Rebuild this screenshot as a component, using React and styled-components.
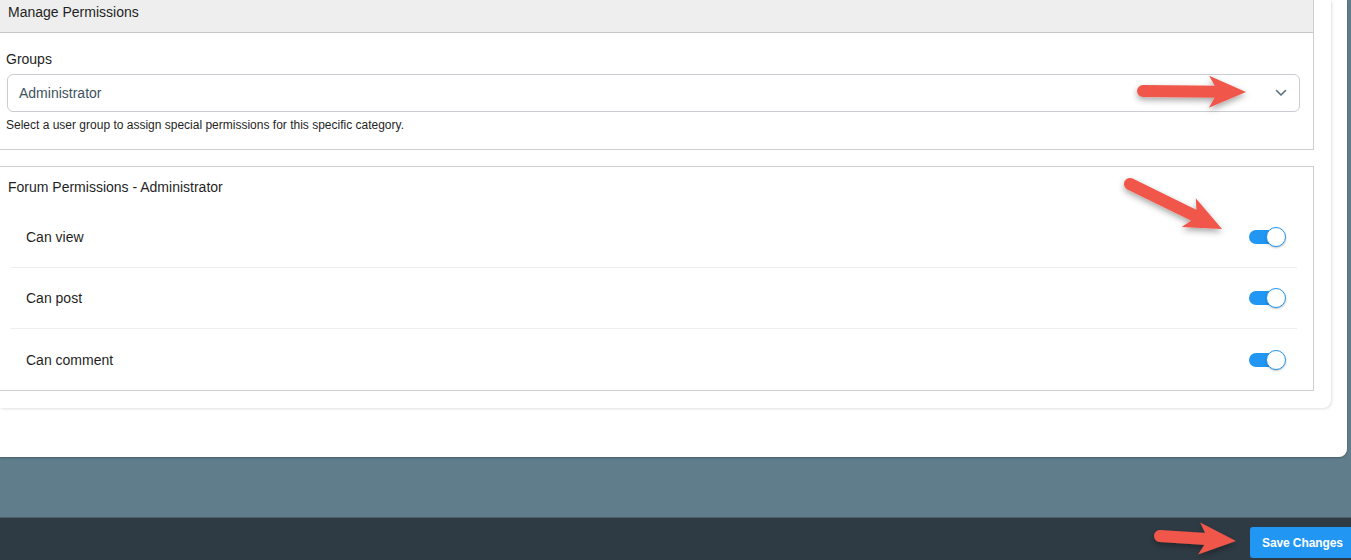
import React from 'react';
import styled, { createGlobalStyle } from 'styled-components';

const GlobalStyle = createGlobalStyle`
  html, body {
    margin: 0;
    padding: 0;
    background: #607d8b;
    font-family: "Liberation Sans", Arial, sans-serif;
    overflow: hidden;
  }
`;

const Page = styled.div`
  position: relative;
  width: 1351px;
  height: 560px;
  display: flex;
  flex-direction: column;
  background: #607d8b;
`;

const Sheet = styled.div`
  width: 1347px;
  height: 457px;
  background: #fff;
  border-radius: 0 0 8px 0;
  box-sizing: border-box;
  box-shadow: 0 1px 2px rgba(0, 0, 0, 0.25);
`;

const Card = styled.div`
  width: 1331px;
  height: 408px;
  box-sizing: border-box;
  padding-right: 17px;
  background: #fff;
  border-radius: 0 0 8px 0;
  box-shadow: 1px 1px 3px rgba(0, 0, 0, 0.12);
  display: flex;
  flex-direction: column;
  gap: 16px;
`;

const Block = styled.div`
  border-right: 1px solid #cfcfcf;
`;

const Header = styled.div`
  height: 33px;
  box-sizing: border-box;
  padding: 4px 8px 0;
  background: #eeeeee;
  border-bottom: 1px solid #c6c6c6;
  font-size: 14px;
  color: #1f1f1f;
`;

const GroupsBody = styled.div`
  height: 117px;
  box-sizing: border-box;
  padding: 18px 13px 0 7px;
  border-bottom: 1px solid #cfcfcf;
`;

const Label = styled.div`
  font-size: 14px;
  color: #1f1f1f;
  line-height: 17px;
  margin: 0 0 6px -1px;
`;

const Select = styled.div`
  height: 38px;
  box-sizing: border-box;
  border: 1px solid #c9cdd2;
  border-radius: 6px;
  display: flex;
  align-items: center;
  justify-content: space-between;
  padding: 0 12px 0 11px;
  font-size: 14px;
  color: #3e5360;
`;

const Help = styled.div`
  font-size: 12px;
  color: #1f1f1f;
  margin: 6px 0 0 -1px;
`;

const Section = styled.div`
  height: 225px;
  box-sizing: border-box;
  border-top: 1px solid #cfcfcf;
  border-bottom: 1px solid #cfcfcf;
  border-right: 1px solid #cfcfcf;
  padding: 12px 16px 0 10px;
  display: flex;
  flex-direction: column;
`;

const SectionTitle = styled.div`
  font-size: 14px;
  line-height: 17px;
  color: #1f1f1f;
  margin: 0 0 11px -2px;
`;

const Row = styled.div`
  height: 61px;
  box-sizing: border-box;
  display: flex;
  align-items: center;
  justify-content: space-between;
  padding: 0 11px 0 16px;
  border-bottom: ${(p) => (p.$last ? 'none' : '1px solid #eeeeee')};
  font-size: 14px;
  color: #1f1f1f;
`;

const Toggle = styled.div`
  position: relative;
  width: 37px;
  height: 20px;
  display: flex;
  align-items: center;
  justify-content: flex-end;

  &::before {
    content: '';
    position: absolute;
    left: 0;
    right: 4px;
    top: 3px;
    bottom: 3px;
    border-radius: 7px;
    background: #2196f3;
  }
`;

const Knob = styled.span`
  position: relative;
  width: 20px;
  height: 20px;
  box-sizing: border-box;
  border-radius: 50%;
  background: #fff;
  border: 1px solid #2196f3;
  box-shadow: 0 1px 2px rgba(0, 0, 0, 0.25);
`;

const Spacer = styled.div`
  flex: 1;
`;

const Footer = styled.div`
  height: 43px;
  background: #2f3b44;
  border-top: 1px solid #4d5f69;
  display: flex;
  justify-content: flex-end;
  align-items: flex-start;
  padding-top: 9px;
  box-sizing: border-box;
`;

const SaveButton = styled.button`
  width: 101px;
  height: 31px;
  border: none;
  border-radius: 3px 0 0 3px;
  background: #2196f3;
  color: #fff;
  font-family: "Liberation Sans", Arial, sans-serif;
  font-weight: bold;
  font-size: 12px;
  letter-spacing: -0.1px;
  text-align: left;
  padding: 0 0 0 12px;
  white-space: nowrap;
`;

const Overlay = styled.svg`
  position: absolute;
  left: 0;
  top: 0;
  pointer-events: none;
`;

const Chevron = () => (
  <svg width="12" height="8" viewBox="0 0 12 8">
    <path d="M1.5 1.5 L6 6 L10.5 1.5" fill="none" stroke="#5b6f7c" strokeWidth="1.6" strokeLinecap="round" strokeLinejoin="round" />
  </svg>
);

const arrows = [
  { x1: 1143, y1: 91, x2: 1246, y2: 92 },
  { x1: 1130, y1: 184, x2: 1222, y2: 229 },
  { x1: 1160, y1: 536, x2: 1236, y2: 541 },
];

const Arrow = ({ x1, y1, x2, y2 }) => {
  const dx = x2 - x1;
  const dy = y2 - y1;
  const len = Math.hypot(dx, dy);
  const ux = dx / len;
  const uy = dy / len;
  const nx = -uy;
  const ny = ux;
  const head = 32;
  const hw = 16;
  const bx = x2 - ux * head;
  const by = y2 - uy * head;
  const back = 5;
  const points = [
    [x2, y2],
    [bx - ux * back + nx * hw, by - uy * back + ny * hw],
    [bx + ux * 4, by + uy * 4],
    [bx - ux * back - nx * hw, by - uy * back - ny * hw],
  ]
    .map((p) => p.join(','))
    .join(' ');
  return (
    <g filter="url(#shadow)">
      <line x1={x1} y1={y1} x2={bx + ux * 6} y2={by + uy * 6} stroke="#f0564a" strokeWidth="12" strokeLinecap="round" />
      <polygon points={points} fill="#f0564a" />
    </g>
  );
};

const permissions = ['Can view', 'Can post', 'Can comment'];

export default function App() {
  return (
    <>
      <GlobalStyle />
      <Page>
        <Sheet>
          <Card>
            <Block>
              <Header>Manage Permissions</Header>
              <GroupsBody>
                <Label>Groups</Label>
                <Select>
                  <span>Administrator</span>
                  <Chevron />
                </Select>
                <Help>Select a user group to assign special permissions for this specific category.</Help>
              </GroupsBody>
            </Block>
            <Section>
              <SectionTitle>Forum Permissions - Administrator</SectionTitle>
              {permissions.map((p, i) => (
                <Row key={p} $last={i === permissions.length - 1}>
                  <span>{p}</span>
                  <Toggle>
                    <Knob />
                  </Toggle>
                </Row>
              ))}
            </Section>
          </Card>
        </Sheet>
        <Spacer />
        <Footer>
          <SaveButton>Save Changes</SaveButton>
        </Footer>
        <Overlay width="1351" height="560">
          <defs>
            <filter id="shadow" x="-20%" y="-50%" width="140%" height="200%">
              <feDropShadow dx="0" dy="3" stdDeviation="3" floodColor="#000" floodOpacity="0.35" />
            </filter>
          </defs>
          {arrows.map((a, i) => (
            <Arrow key={i} {...a} />
          ))}
        </Overlay>
      </Page>
    </>
  );
}
